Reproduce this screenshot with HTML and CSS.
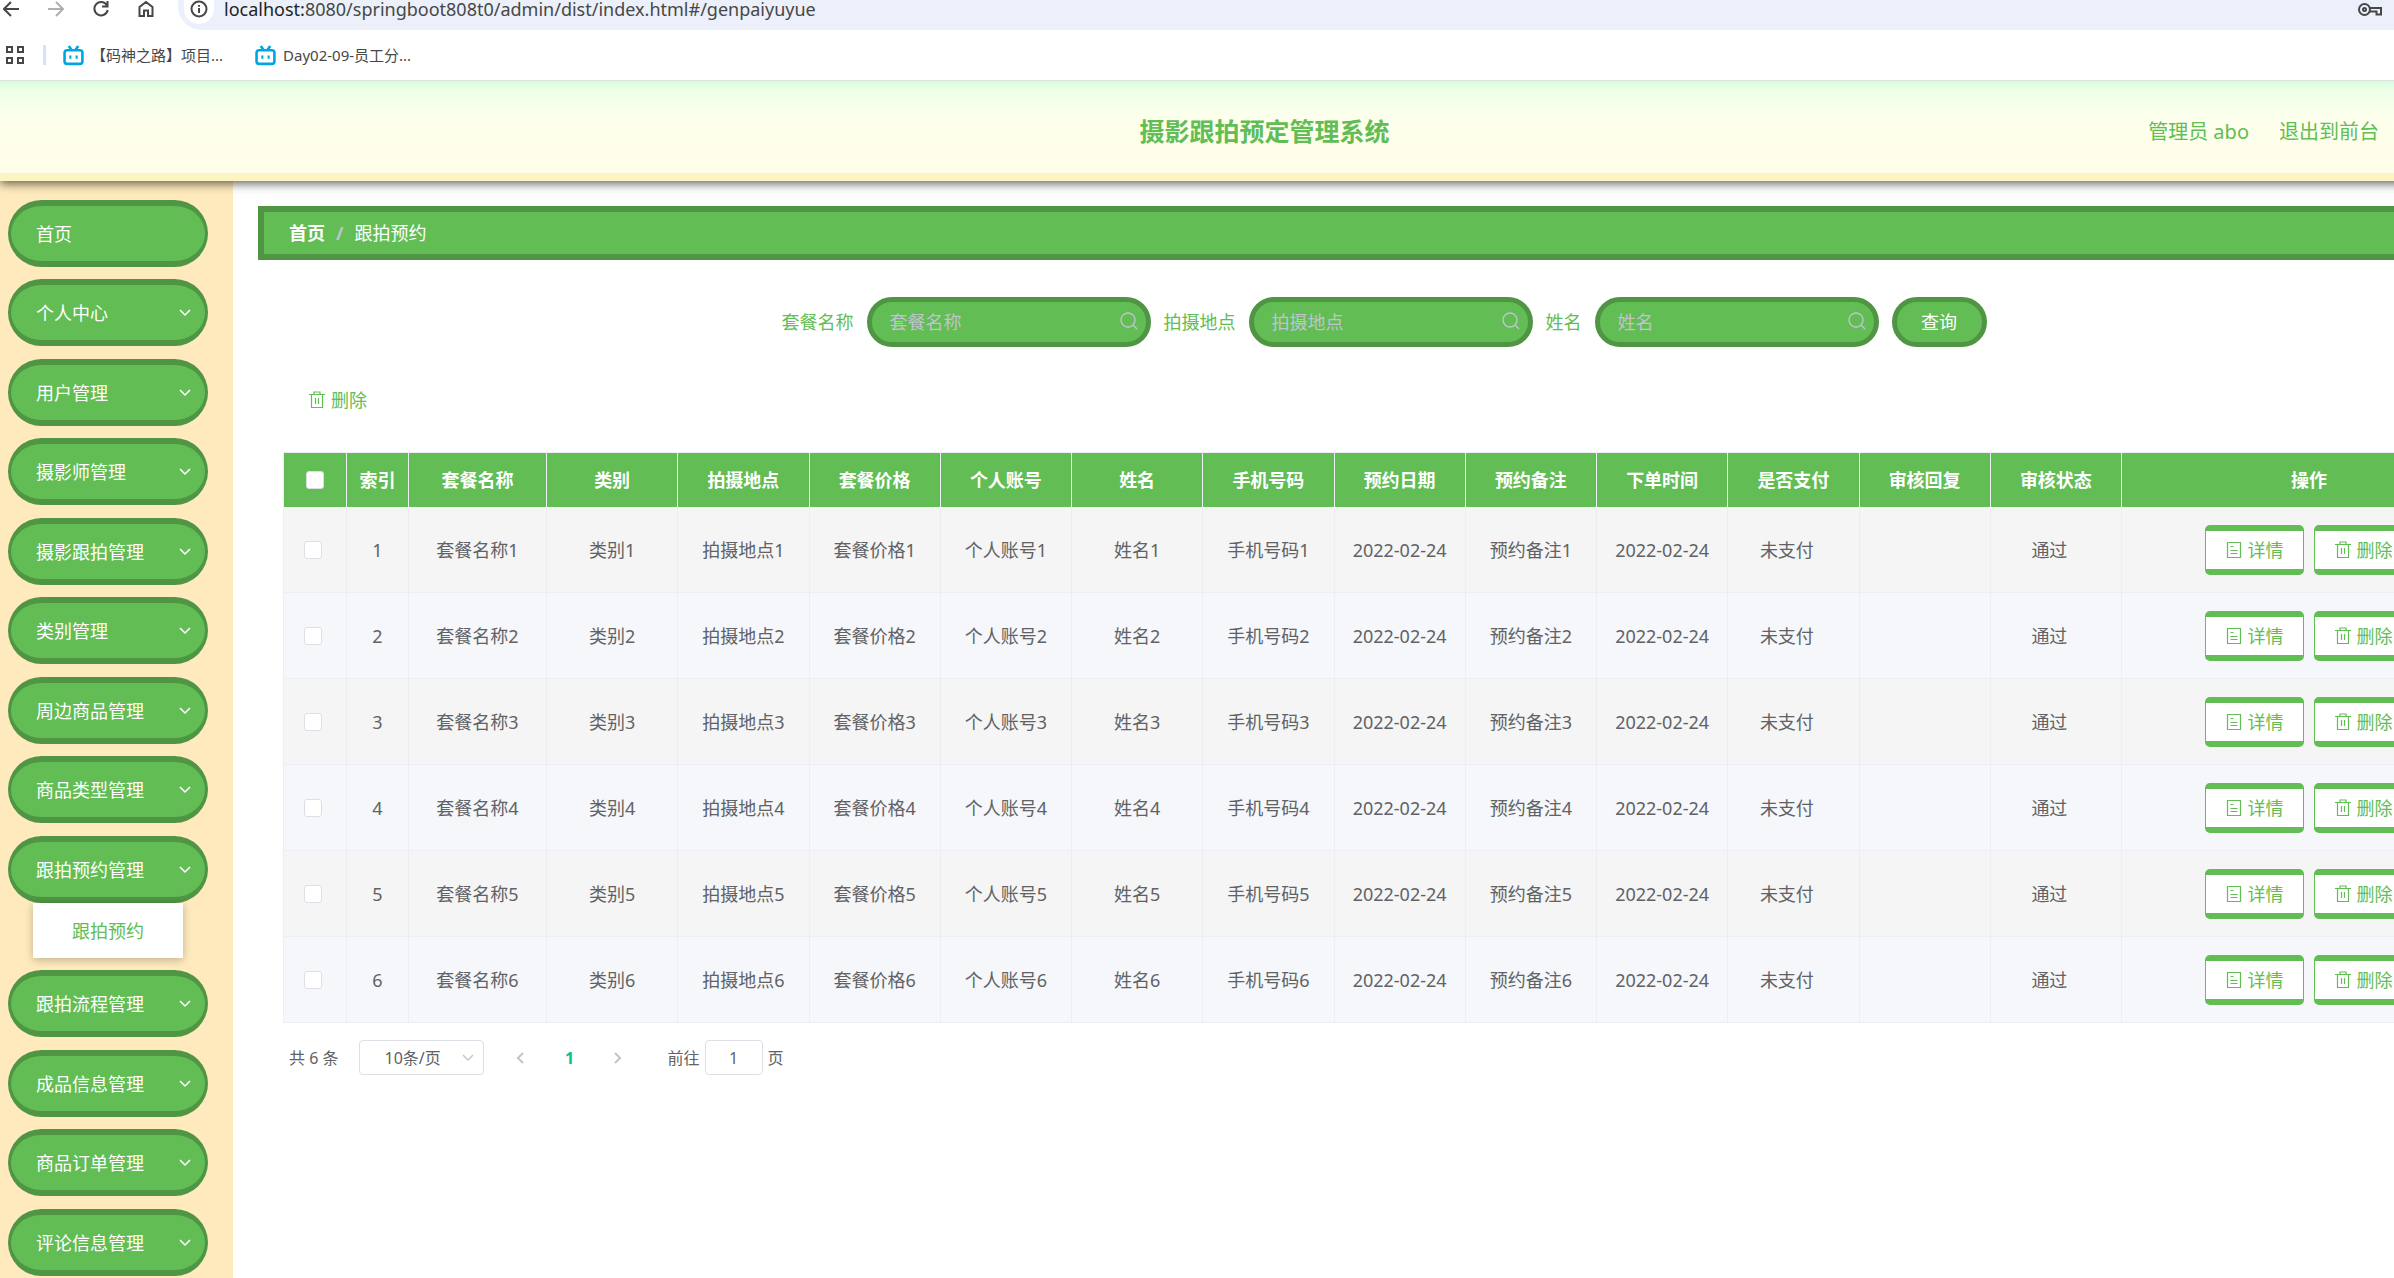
FILE: index.html
```html
<!DOCTYPE html>
<html lang="zh-CN">
<head>
<meta charset="utf-8">
<title>摄影跟拍预定管理系统</title>
<link rel="stylesheet" href="styles.css">
</head>
<body>
<svg class="defs" aria-hidden="true">
  <symbol id="trash" viewBox="0 0 16 18"><path d="M0 3.5h16M5 3.500v-2.500h6v2.500M2.500 3.500v13h11v-13M6.500 7v6M9.500 7v6"/></symbol>
  <symbol id="doc" viewBox="0 0 16 18"><path d="M1.500 1.500h13v15h-13zM4.500 5.500h3M4.500 9.500h7M4.500 12.500h7"/></symbol>
  <symbol id="down" viewBox="0 0 12 8"><path d="M1 1l5 5 5-5"/></symbol>
  <symbol id="search" viewBox="0 0 18 18"><circle cx="8" cy="8" r="7"/><path d="M13 13l4 4"/></symbol>
  <symbol id="bili" viewBox="0 0 20 20"><path d="M5.500 1l2.500 3.500M14.500 1l-2.500 3.500" /><rect x="1.500" y="5" width="17" height="13" rx="2.500"/><path stroke-width="2" d="M7 10v3M13 10v3"/></symbol>
</svg>
<div class="browser">
  <div class="toolbar">
    <button class="nav" aria-label="后退"><svg viewBox="0 0 16 16"><path d="M16 8H1.500M8 1L1 8l7 7"/></svg></button>
    <button class="nav off" aria-label="前进"><svg viewBox="0 0 16 16"><path d="M0 8h14.500M8 1l7 7-7 7"/></svg></button>
    <button class="nav" aria-label="刷新"><svg viewBox="0 0 16 16"><path d="M14 4.500A6.700 6.700 0 1 0 14.700 9M14.500 0v5.500H9"/></svg></button>
    <button class="nav" aria-label="主页"><svg viewBox="0 0 16 16"><path d="M1.500 15V6L8 1l6.500 5v9H10V9.500H6V15z"/></svg></button>
    <div class="omnibox">
      <span class="info"><svg viewBox="0 0 18 18"><circle cx="9" cy="9" r="7.500"/><path d="M9 8v5M9 5v1.800"/></svg></span>
      <span class="url"><b>localhost:</b>8080/springboot808t0/admin/dist/index.html#/genpaiyuyue</span>
      <svg class="key" viewBox="0 0 24 14"><circle cx="6.500" cy="6.500" r="5.500"/><circle cx="6.500" cy="6.500" r="1.500"/><path d="M11.500 5h11.500v6.500h-4.500v-3h-7"/></svg>
    </div>
  </div>
  <div class="bookmarks">
    <svg class="apps" viewBox="0 0 20 20"><path d="M2 2h5v5H2zM13 2h5v5h-5zM2 13h5v5H2zM13 13h5v5h-5z"/></svg>
    <i class="sep"></i>
    <a href="#" class="mark"><svg class="bili"><use href="#bili"/></svg>【码神之路】项目...</a>
    <a href="#" class="mark"><svg class="bili"><use href="#bili"/></svg>Day02-09-员工分...</a>
  </div>
</div>
<div class="page">
  <header class="header">
    <h1>摄影跟拍预定管理系统</h1>
    <div class="user"><span>管理员 abo</span><a href="#">退出到前台</a></div>
  </header>
  <div class="layout">
    <nav class="side">
      <ul>
        <li><a href="#">首页</a></li>
        <li><a href="#">个人中心<svg><use href="#down"/></svg></a></li>
        <li><a href="#">用户管理<svg><use href="#down"/></svg></a></li>
        <li><a href="#">摄影师管理<svg><use href="#down"/></svg></a></li>
        <li><a href="#">摄影跟拍管理<svg><use href="#down"/></svg></a></li>
        <li><a href="#">类别管理<svg><use href="#down"/></svg></a></li>
        <li><a href="#">周边商品管理<svg><use href="#down"/></svg></a></li>
        <li><a href="#">商品类型管理<svg><use href="#down"/></svg></a></li>
        <li><a href="#">跟拍预约管理<svg><use href="#down"/></svg></a><a class="sub" href="#">跟拍预约</a></li>
        <li><a href="#">跟拍流程管理<svg><use href="#down"/></svg></a></li>
        <li><a href="#">成品信息管理<svg><use href="#down"/></svg></a></li>
        <li><a href="#">商品订单管理<svg><use href="#down"/></svg></a></li>
        <li><a href="#">评论信息管理<svg><use href="#down"/></svg></a></li>
      </ul>
    </nav>
    <main class="main">
      <div class="crumbs"><a href="#">首页</a><i>/</i><span>跟拍预约</span></div>
      <form class="search">
        <label for="q1">套餐名称</label>
        <div class="field"><input id="q1" placeholder="套餐名称"><svg><use href="#search"/></svg></div>
        <label for="q2">拍摄地点</label>
        <div class="field"><input id="q2" placeholder="拍摄地点"><svg><use href="#search"/></svg></div>
        <label for="q3">姓名</label>
        <div class="field"><input id="q3" placeholder="姓名"><svg><use href="#search"/></svg></div>
        <button type="button">查询</button>
      </form>
      <div class="content">
        <button class="remove"><svg><use href="#trash"/></svg>删除</button>
        <table>
          <colgroup><col class="c-check"><col class="c-index"><col class="c-name"><col span="12"><col class="c-ops"></colgroup>
          <thead><tr><th><input type="checkbox" aria-label="全选"></th><th>索引</th><th>套餐名称</th><th>类别</th><th>拍摄地点</th><th>套餐价格</th><th>个人账号</th><th>姓名</th><th>手机号码</th><th>预约日期</th><th>预约备注</th><th>下单时间</th><th>是否支付</th><th>审核回复</th><th>审核状态</th><th>操作</th></tr></thead>
          <tbody id="rows"></tbody>
        </table>
        <div class="pager">
          <span>共 6 条</span>
          <div class="size"><select aria-label="每页条数"><option>10条/页</option></select><svg><use href="#down"/></svg></div>
          <button class="step prev" aria-label="上一页"><svg><use href="#down"/></svg></button>
          <button class="current">1</button>
          <button class="step next" aria-label="下一页"><svg><use href="#down"/></svg></button>
          <label class="jump">前往<input value="1">页</label>
        </div>
      </div>
    </main>
  </div>
</div>
<script src="app.js"></script>
</body>
</html>
```
FILE: app.js
```js
const columns = ['套餐名称', '类别', '拍摄地点', '套餐价格', '个人账号', '姓名', '手机号码'];
const cell = (text) => `<td>${text}</td>`;
const button = (icon, text) => `<button><svg><use href="#${icon}"/></svg>${text}</button>`;

document.getElementById('rows').innerHTML = [1, 2, 3, 4, 5, 6].map((n) => `<tr>
  <td class="pick"><input type="checkbox" aria-label="选择第${n}行"></td>
  ${cell(n)}${columns.map((name) => cell(name + n)).join('')}
  ${cell('2022-02-24')}${cell('预约备注' + n)}${cell('2022-02-24')}
  <td class="state">未支付</td><td></td><td class="state">通过</td>
  <td><div class="ops">${button('doc', '详情')}${button('trash', '删除')}</div></td>
</tr>`).join('');
```
FILE: styles.css
```css
* { box-sizing: border-box; }
:root { --green: #61bd54; --dark: #4f9544; --line: #ebeef5; }
body {
  margin: 0;
  overflow: hidden;
  font: 18px/26px "Noto Sans", "Noto Sans CJK SC", sans-serif;
  color: #606266;
  background: #fff;
}
a { color: inherit; text-decoration: none; }
button, input, select { font: inherit; color: inherit; margin: 0; }
button { padding: 0; border: 0; background: none; }
svg { fill: none; stroke: currentColor; flex: none; }
i { font-style: normal; }
.defs { display: none; }

/* browser bars */
.browser { position: relative; z-index: 1; height: 81px; background: #fff; border-bottom: 1px solid #dfe1e0; color: #474747; }
.toolbar { display: flex; height: 30px; padding-left: 3px; }
.nav { width: 16px; height: 18px; margin-right: 29px; }
.nav svg { display: block; width: 16px; height: 18px; stroke-width: 2; }
.off { color: #b0b0b0; }
.omnibox {
  flex: 1;
  display: flex;
  align-items: flex-start;
  margin-left: -5px;
  padding-right: 12px;
  background: #ebf0fa;
  border-bottom-left-radius: 24px;
}
.info {
  display: grid;
  place-items: end center;
  width: 30px;
  height: 24px;
  margin-left: 6px;
  padding-bottom: 6px;
  background: #fff;
  border-radius: 0 0 15px 15px;
}
.info svg { width: 18px; height: 18px; stroke-width: 2; }
.url { flex: 1; margin-left: 10px; font-size: 18px; line-height: 18px; }
.url b { font-weight: 400; color: #1f1f1f; }
.key { width: 24px; height: 14px; margin-top: 3px; stroke-width: 2; }
.bookmarks { display: flex; align-items: center; height: 50px; padding-left: 5px; font-size: 15px; line-height: 20px; }
.apps { width: 20px; height: 20px; stroke-width: 2; }
.sep { width: 3px; height: 20px; margin: 0 17px 0 18px; background: #d3e3fd; }
.mark { display: flex; align-items: center; gap: 7px; margin-right: 32px; }
.bili { width: 21px; height: 21px; color: #00a7e4; stroke-width: 2.5; }

/* the admin page is wider than the window and runs off its right edge */
.page { width: calc(100% + 153px); }
.header {
  position: relative;
  display: grid;
  grid-template-columns: 1fr auto 1fr;
  align-items: center;
  height: 100px;
  padding: 0 168px 0 150px;
  color: var(--green);
  border-bottom: 8px solid #fdf4c4;
  background: linear-gradient(#d0ffd8 0, #ebffe7 6px, #f5ffea 22px, #fdffec 38px, #fffde8 100%);
  box-shadow: 0 2px 10px #000000b0;
}
.header h1 { grid-column: 2; margin: 8px 0 0; font-size: 25px; line-height: 36px; }
.user { display: flex; gap: 30px; justify-content: flex-end; margin-top: 10px; font-size: 20px; }

.layout { display: flex; }
.side { flex: none; width: 233px; padding: 19px 25px 0 8px; background: #ffeabd; }
.side ul { margin: 0; padding: 0; list-style: none; }
.side li { margin-bottom: 12px; }
.side li:nth-child(even) { margin-bottom: 13px; }
.side a {
  display: flex;
  align-items: center;
  justify-content: space-between;
  height: 67px;
  padding: 0 14px 0 25px;
  color: #fff;
  background: var(--green);
  border: solid var(--dark);
  border-width: 6px 3px;
  border-radius: 34px;
}
.side svg { width: 12px; height: 8px; stroke-width: 1.5; }
.side .sub {
  justify-content: center;
  height: 55px;
  margin: 0 25px;
  padding: 0;
  color: var(--green);
  background: #fff;
  border: 0;
  border-radius: 0;
  box-shadow: 0 2px 8px #00000040;
}

.main { flex: 1; padding: 25px; }
.crumbs {
  display: flex;
  align-items: center;
  gap: 11px;
  height: 54px;
  padding: 0 25px;
  color: #fff;
  background: var(--green);
  border: 6px solid var(--dark);
}
.crumbs a { font-weight: 700; }
.crumbs i { color: #c0c4cc; font-weight: 700; }
.search { display: flex; align-items: center; justify-content: center; gap: 13px; margin: 37px 12px 0 0; color: var(--green); }
.field { position: relative; width: 284px; color: #c0c4cc; }
.field input, .search button {
  display: block;
  width: 100%;
  height: 50px;
  padding: 0 18px;
  background: var(--green);
  border: 5px solid var(--dark);
  border-radius: 25px;
}
.field input::placeholder { color: #c0c4cc; opacity: 1; }
.field svg { position: absolute; right: 13px; top: 15px; width: 18px; height: 18px; stroke-width: 1.4; }
.search button { width: 95px; padding: 0; color: #fff; }

.content { padding: 40px 25px 0; }
.remove { display: flex; align-items: center; gap: 6px; margin-left: 26px; color: var(--green); }
.remove svg, .ops svg { width: 16px; height: 18px; stroke-width: 1.2; }
table {
  width: 100%;
  margin-top: 39px;
  table-layout: fixed;
  border-spacing: 0;
  border: solid var(--line);
  border-width: 1px 0 0 1px;
  text-align: center;
}
.c-check { width: 63px; }
.c-index { width: 62px; }
.c-name { width: 138px; }
.c-ops { width: 375px; }
th, td { padding: 0; border: solid var(--line); border-width: 0 1px 1px 0; }
th { height: 54px; color: #fff; background: var(--green); border-bottom: 0; }
td { height: 86px; background: #f5f5f5; }
tr:nth-child(even) td { background: #f5f7fa; }
.pick { padding-right: 5px; }
.state { padding-right: 13px; }
input[type="checkbox"] {
  display: block;
  appearance: none;
  width: 18px;
  height: 18px;
  margin: 0 auto;
  background: #fff;
  border: 1px solid #dcdfe6;
  border-radius: 3px;
}
.ops { display: flex; justify-content: center; gap: 10px; color: var(--green); }
.ops button {
  display: flex;
  align-items: center;
  justify-content: center;
  gap: 6px;
  width: 99px;
  height: 50px;
  background: #fff;
  border: solid var(--green);
  border-width: 6px 1px;
  border-radius: 5px;
}

.pager { display: flex; align-items: center; margin-top: 17px; padding-left: 6px; font-size: 16px; }
.size { position: relative; width: 125px; margin-left: 21px; color: #606266; }
.size select {
  display: block;
  appearance: none;
  width: 100%;
  height: 35px;
  padding: 0 24px;
  background: #fff;
  border: 1px solid #dcdfe6;
  border-radius: 4px;
}
.size svg { position: absolute; right: 10px; top: 14px; width: 12px; height: 8px; color: #c0c4cc; stroke-width: 1.4; }
.step { display: grid; place-items: center; width: 44px; height: 35px; color: #c0c4cc; }
.step svg { width: 12px; height: 8px; stroke-width: 2; }
.prev { margin-left: 14px; }
.prev svg { transform: rotate(90deg); }
.next svg { transform: rotate(-90deg); }
.current { width: 54px; font-weight: 700; color: #00c292; }
.jump { display: flex; align-items: center; gap: 5px; margin-left: 27px; }
.jump input { width: 58px; height: 35px; padding: 0; text-align: center; background: #fff; border: 1px solid #dcdfe6; border-radius: 4px; }
```
